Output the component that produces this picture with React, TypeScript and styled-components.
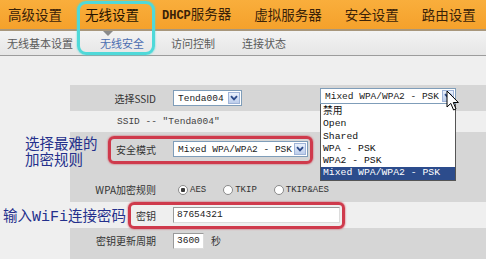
import styled, { createGlobalStyle } from 'styled-components';

const GlobalStyle = createGlobalStyle`
  html, body {
    margin: 0;
    padding: 0;
    background: #efefef;
  }
  body {
    font-family: "Noto Sans CJK SC", "Noto Sans", sans-serif;
  }
`;

const MONO = `"Liberation Mono", "Noto Sans CJK SC", monospace`;

const Page = styled.div`
  position: relative;
  width: 486px;
  height: 259px;
  overflow: hidden;
  background: #efefef;
`;

// top orange menu
const TopBar = styled.div`
  height: 29px;
  background: linear-gradient(#f9ae3c, #f5a12b);
  border-bottom: 2px solid #a8977c;
  display: flex;
  align-items: center;
  padding-left: 8px;
  gap: 23px;
`;

const TopTab = styled.div<{ $active?: boolean }>`
  font-size: 13.5px;
  line-height: 1;
  white-space: nowrap;
  color: ${({ $active }) => ($active ? '#241200' : '#3a2208')};
`;

const TabLatin = styled.span`
  font-family: "Liberation Mono", monospace;
  font-weight: bold;
  font-size: 12px;
`;

// second level menu
const SubBar = styled.div`
  position: relative;
  height: 24px;
  background: linear-gradient(#f3f3f3, #e6e6e6);
  border-bottom: 1px solid #9c9c9c;
  display: flex;
  align-items: center;
  padding-left: 7px;
  gap: 27px;
`;

const SubTab = styled.div<{ $active?: boolean }>`
  font-size: 11px;
  white-space: nowrap;
  color: ${({ $active }) => ($active ? '#4a6cb0' : '#5a5a5a')};
`;

const Pointer = styled.div`
  position: absolute;
  left: 103px;
  top: 0;
  width: 0;
  height: 0;
  border-left: 5px solid transparent;
  border-right: 5px solid transparent;
  border-top: 5px solid #8a8a8a;
`;

// form table
const Content = styled.div`
  padding-left: 70px;
  display: flex;
  flex-direction: column;
`;

const Row = styled.div<{ $h: number; $shade?: boolean }>`
  height: ${({ $h }) => $h}px;
  background: ${({ $shade }) => ($shade ? '#d6d6d6' : '#efefef')};
  display: grid;
  grid-template-columns: 86px auto;
  column-gap: 17px;
  align-items: center;
`;

const Label = styled.div`
  text-align: right;
  font-size: 10px;
  line-height: 15px;
  color: #333;
  white-space: nowrap;
`;

const Value = styled.div`
  display: flex;
  align-items: center;
  gap: 7px;
  font-size: 10px;
  color: #333;
`;

const Note = styled.div<{ $indent: number }>`
  grid-column: 1 / -1;
  padding-left: ${({ $indent }) => $indent}px;
  font-family: ${MONO};
  font-size: 9.5px;
  color: #444;
`;

const Select = styled.div<{ $w: number }>`
  box-sizing: border-box;
  width: ${({ $w }) => $w}px;
  height: 16px;
  border: 1px solid #7f9db9;
  background: #fff;
  display: flex;
  align-items: center;
  justify-content: space-between;
  padding: 0 1px 0 4px;
  font-family: ${MONO};
  font-size: 9.5px;
  white-space: pre;
  overflow: hidden;
  color: #222;
`;

const ArrowBtn = styled.span`
  box-sizing: border-box;
  flex: none;
  width: 12px;
  height: 12px;
  border: 1px solid #9fb4d8;
  background: linear-gradient(#eaf1fc, #bccdeb);
  display: flex;
  align-items: center;
  justify-content: center;
`;

const TextInput = styled.div<{ $w: number }>`
  box-sizing: border-box;
  width: ${({ $w }) => $w}px;
  height: 16px;
  border: 1px solid #9a9a9a;
  border-right-color: #dcdcdc;
  border-bottom-color: #dcdcdc;
  background: #fff;
  padding-left: 3px;
  font-family: ${MONO};
  font-size: 9.5px;
  line-height: 14px;
  color: #222;
`;

const Radios = styled.div`
  display: flex;
  align-items: center;
  gap: 17px;
  margin-left: 5px;
`;

const RadioItem = styled.label`
  display: flex;
  align-items: center;
  gap: 2px;
  font-family: ${MONO};
  font-size: 9px;
  color: #333;
`;

const RadioDot = styled.span<{ $on?: boolean }>`
  box-sizing: border-box;
  width: 10px;
  height: 10px;
  border-radius: 50%;
  border: 1px solid #8c8c8c;
  background: radial-gradient(circle, ${({ $on }) => ($on ? '#3a3a3a 0 2px, #fff 2.5px' : '#fff 0')});
`;

// overlays: annotation marks, callouts, open dropdown, cursor
const Mark = styled.div<{ $x: number; $y: number; $w: number; $h: number; $color: string; $r: number }>`
  position: absolute;
  left: ${({ $x }) => $x}px;
  top: ${({ $y }) => $y}px;
  width: ${({ $w }) => $w}px;
  height: ${({ $h }) => $h}px;
  box-sizing: border-box;
  border: 3px solid ${({ $color }) => $color};
  border-radius: ${({ $r }) => $r}px;
  box-shadow: 0 0 2px ${({ $color }) => $color};
  pointer-events: none;
`;

const Callout = styled.div<{ $x: number; $y: number }>`
  position: absolute;
  left: ${({ $x }) => $x}px;
  top: ${({ $y }) => $y}px;
  font-size: 14.5px;
  line-height: 17px;
  color: #24308c;
  white-space: nowrap;
`;

const CalloutLine = styled.div`
  height: 16px;
  line-height: 16px;
`;

const CalloutLatin = styled.span`
  font-family: "Liberation Mono", monospace;
  font-size: 15px;
`;

const Dropdown = styled.div`
  position: absolute;
  left: 320px;
  top: 88px;
  width: 136px;
`;

const DropList = styled.div`
  border: 1px solid #555;
  border-top: none;
  padding-top: 2px;
  background: #fff;
`;

const DropItem = styled.div<{ $sel?: boolean }>`
  height: 12.3px;
  line-height: 12.3px;
  padding-left: 2px;
  font-family: ${MONO};
  font-size: 9.75px;
  white-space: pre;
  color: ${({ $sel }) => ($sel ? '#fff' : '#111')};
  background: ${({ $sel }) => ($sel ? '#2c4c8c' : 'transparent')};
`;

const Cursor = styled.svg`
  position: absolute;
  left: 446px;
  top: 90px;
`;

const Chevron = () => (
  <svg width="8" height="6" viewBox="0 0 8 6">
    <path d="M1 1.2 L4 4.4 L7 1.2" fill="none" stroke="#2c4a8a" strokeWidth="1.8" />
  </svg>
);

const tabs = ['高级设置', '无线设置', 'DHCP服务器', '虚拟服务器', '安全设置', '路由设置'];
const subTabs = ['无线基本设置', '无线安全', '访问控制', '连接状态'];
const modes = ['禁用', 'Open', 'Shared', 'WPA - PSK', 'WPA2 - PSK', 'Mixed WPA/WPA2 - PSK'];

export default function App() {
  return (
    <Page>
      <GlobalStyle />
      <TopBar>
        {tabs.map((t) => (
          <TopTab key={t} $active={t === '无线设置'}>
            {t.startsWith('DHCP') ? (
              <>
                <TabLatin>DHCP</TabLatin>服务器
              </>
            ) : (
              t
            )}
          </TopTab>
        ))}
      </TopBar>
      <SubBar>
        <Pointer />
        {subTabs.map((t) => (
          <SubTab key={t} $active={t === '无线安全'}>
            {t}
          </SubTab>
        ))}
      </SubBar>

      <Content>
        <Row $h={29} />
        <Row $h={26} $shade>
          <Label>选择SSID</Label>
          <Value>
            <Select $w={69}>
              Tenda004
              <ArrowBtn>
                <Chevron />
              </ArrowBtn>
            </Select>
          </Value>
        </Row>
        <Row $h={21}>
          <Note $indent={47}>SSID -- "Tenda004"</Note>
        </Row>
        <Row $h={34} $shade>
          <Label>安全模式</Label>
          <Value>
            <Select $w={135}>
              Mixed WPA/WPA2 - PSK
              <ArrowBtn>
                <Chevron />
              </ArrowBtn>
            </Select>
          </Value>
        </Row>
        <Row $h={11} $shade />
        <Row $h={25} $shade>
          <Label>WPA加密规则</Label>
          <Radios>
            <RadioItem>
              <RadioDot $on />
              AES
            </RadioItem>
            <RadioItem>
              <RadioDot />
              TKIP
            </RadioItem>
            <RadioItem>
              <RadioDot />
              TKIP&amp;AES
            </RadioItem>
          </Radios>
        </Row>
        <Row $h={26}>
          <Label>密钥</Label>
          <Value>
            <TextInput $w={167}>87654321</TextInput>
          </Value>
        </Row>
        <Row $h={25} $shade>
          <Label>密钥更新周期</Label>
          <Value>
            <TextInput $w={31}>3600</TextInput>
            秒
          </Value>
        </Row>
        <Row $h={12} $shade />
      </Content>

      <Mark $x={77} $y={1} $w={78} $h={54} $color="#4fd9d9" $r={9} />
      <Mark $x={108} $y={136} $w={205} $h={28} $color="#cf3a4c" $r={6} />
      <Mark $x={128} $y={202} $w={217} $h={27} $color="#cf3a4c" $r={6} />

      <Callout $x={25} $y={135}>
        <CalloutLine>选择最难的</CalloutLine>
        <CalloutLine>加密规则</CalloutLine>
      </Callout>
      <Callout $x={3} $y={206}>
        输入<CalloutLatin>WiFi</CalloutLatin>连接密码
      </Callout>

      <Dropdown>
        <Select $w={136}>
          Mixed WPA/WPA2 - PSK
          <ArrowBtn>
            <Chevron />
          </ArrowBtn>
        </Select>
        <DropList>
          {modes.map((m, i) => (
            <DropItem key={m} $sel={i === modes.length - 1}>
              {m}
            </DropItem>
          ))}
        </DropList>
      </Dropdown>

      <Cursor width="14" height="22" viewBox="0 0 14 22">
        <path
          d="M1 1 L1 17 L4.8 13.4 L7.6 20 L10 19 L7.3 12.5 L12.4 12.5 Z"
          fill="#fff"
          stroke="#000"
          strokeWidth="1"
          strokeLinejoin="round"
        />
      </Cursor>
    </Page>
  );
}
